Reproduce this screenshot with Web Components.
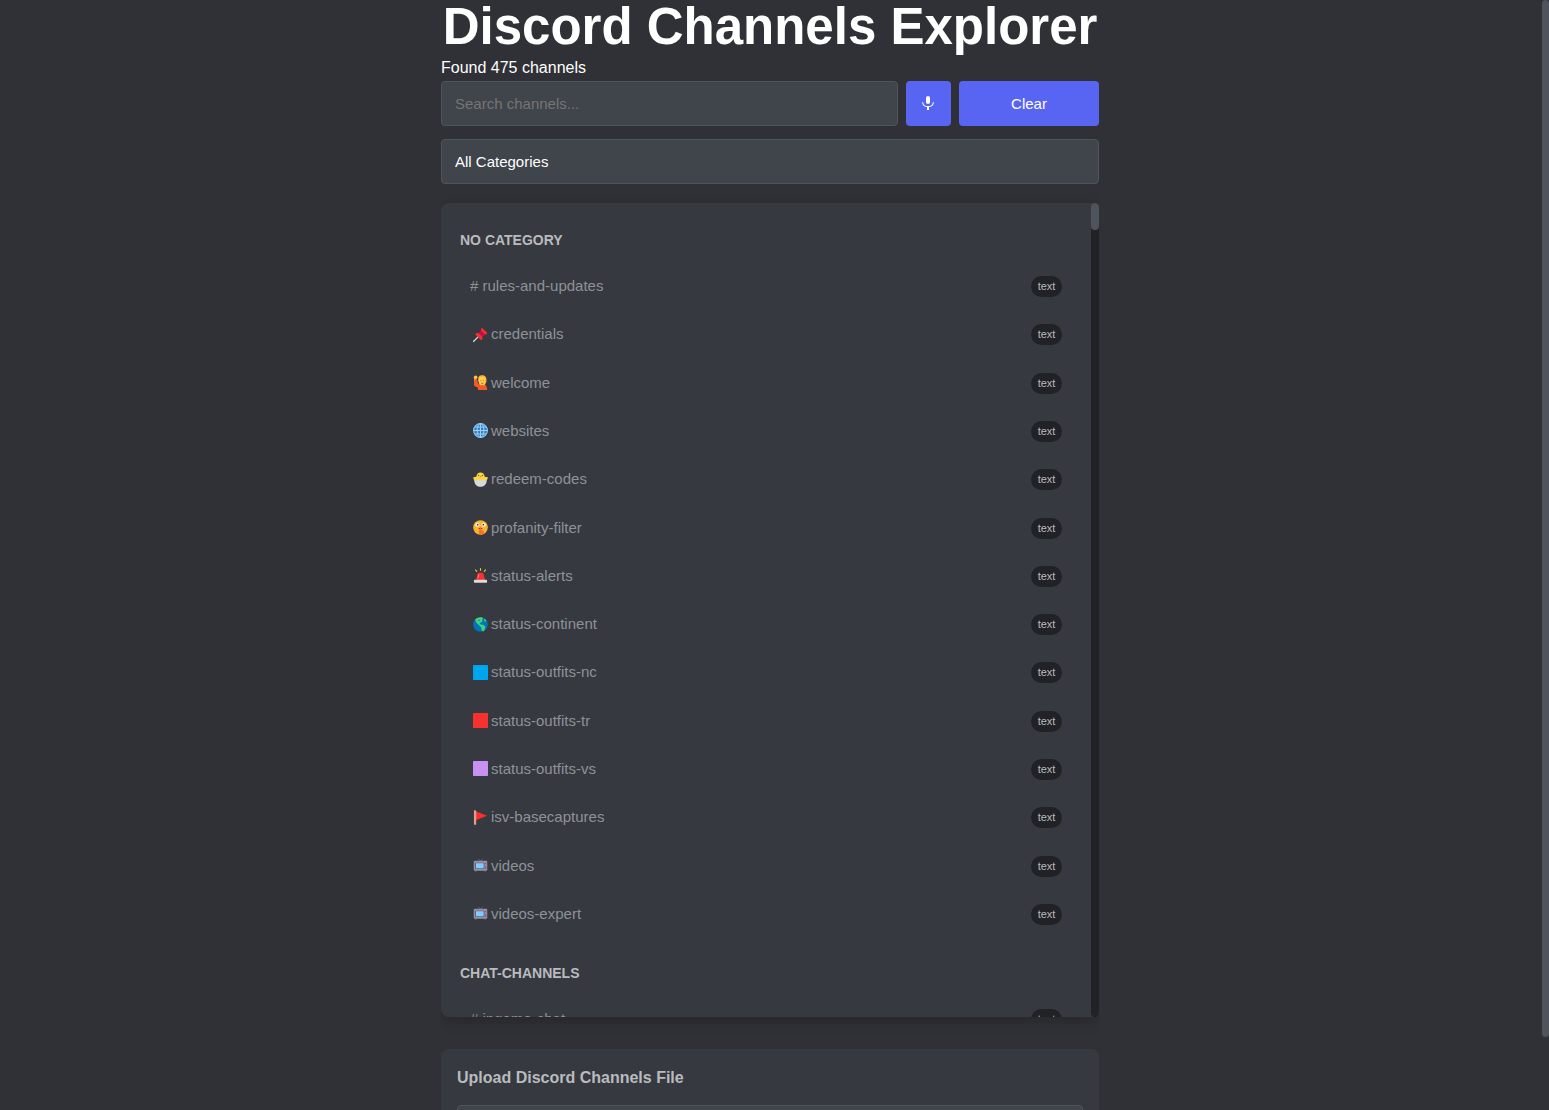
<!DOCTYPE html>
<html lang="en">
<head>
  <meta charset="UTF-8">
  <meta name="viewport" content="width=device-width, initial-scale=1.0">
  <title>Discord Channels Explorer</title>
  <style>
    :root {
      --bg: #2f3136;
      --card: #36393f;
      --field: #40444b;
      --line: #4f545c;
      --dark: #202225;
      --accent: #5865f2;
      --muted: #8e9297;
      --heading: #b9bbbe;
    }

    body {
      margin: 0;
      height: 100vh;
      overflow: hidden;
      background: var(--bg);
      color: #fff;
      font-family: "Liberation Sans", Arial, sans-serif;
      font-size: 15px;
    }
  </style>
</head>
<body>
  <channels-app>
    <page-title count="475">Discord Channels Explorer</page-title>
    <search-bar></search-bar>
    <category-filter></category-filter>
    <channel-list></channel-list>
    <upload-card>Upload Discord Channels File</upload-card>
  </channels-app>

  <script>
    // Channel icons, all on a 16x16 grid
    const ICONS = {
      pin: '<path d="M.5 15.5 6 10" stroke="#d5dbe0" stroke-width="1.4" stroke-linecap="round"/><path d="M9.5.8 15.3 6.4 14 8l-1.2-.3-3 3 .2 2.3-1.2 1.2L2.3 7.7l1.3-1.2 2.4.2 2.8-3-.4-1.4z" fill="#f8312f"/><path d="m8.8 3.7 4 4-3 3L6 6.7z" fill="#ca0b4a"/>',
      wave: '<path d="M1 3.5 3.6 3l.7 4.5L6 9.5l-1 2.3C2.4 10.8 1.3 8.8 1 7z" fill="#ff822d"/><path d="M1 10.5 1.5 5h3l.8 4.500 7 .3c2 1 2.700 3.200 2.900 6.200H5.300L5 13C2.600 13 1.300 12 1 10.500z" fill="#f3582c"/><circle cx="2.8" cy="2.3" r="1.9" fill="#ffc83d"/><path d="M5.5 6C5 1.500 7 .3 9.800.3 13.500.3 15 3 14.200 7.500L12.500 11h-5z" fill="#ffb02e"/><ellipse cx="9.7" cy="6.3" rx="3.5" ry="4.4" fill="#ffd04b"/><path d="M8 6h.8M11 6h.8M8.600 8.500q1.300 1 2.500 0" stroke="#7d4533" stroke-width=".8" fill="none"/>',
      globe: '<circle cx="8" cy="8" r="7.400" fill="#3c7fb8" stroke="#83cbff" stroke-width="1.1"/><ellipse cx="8" cy="8" rx="3.6" ry="7.4" fill="none" stroke="#9bd5ff"/><path d="M8 .6v14.800M.6 8h14.800M1.700 4.300h12.600M1.700 11.700h12.600" stroke="#9bd5ff"/>',
      chick: '<path d="M.2 5.500 3.500 5C3.900 2 5.500.4 8 .4S12.100 2 12.500 5l3.300.5c0 2-1 3.500-3 4H3.200c-2-.5-3-2-3-4z" fill="#fcd53f"/><path d="M1.300 8 3.200 9l2-1.500L8 9.300l2.800-1.800 2 1.500 1.900-1c.2 4.800-2.500 7.800-6.700 7.800S1.100 12.800 1.300 8z" fill="#d9d9d9"/><path d="M7 4.300h2L8 5.500z" fill="#f8642f"/><circle cx="6" cy="3.6" r=".6" fill="#5b4330"/><circle cx="10" cy="3.6" r=".6" fill="#5b4330"/>',
      hush: '<circle cx="8" cy="8" r="7.8" fill="#ffb02e"/><circle cx="4.7" cy="5" r="2.2" fill="#fff"/><circle cx="11.3" cy="5" r="2.2" fill="#fff"/><circle cx="5" cy="5" r=".9" fill="#402a32"/><circle cx="11" cy="5" r=".9" fill="#402a32"/><path d="M6 9.300q2-1 4 0" stroke="#5b3528" fill="none"/><path d="M7.300 8.500c1-.8 1.700 0 1.700 1v1.700c2.200-.3 3 .7 2.700 2.300L10 15.800H8c-1.500-.8-2-2-1.700-3.800z" fill="#f3722a"/>',
      siren: '<path d="m8 .3v2.600M2.500 1.700 4.300 4M13.500 1.700 11.700 4" stroke="#fcc53f" stroke-width="1.2"/><path d="M3 13 4.800 6.500Q5.100 5 6.500 5h3q1.400 0 1.700 1.500L13 13z" fill="#f8312f"/><path d="M6.200 6.800 5.200 11" stroke="#ff8a80"/><rect x="1" y="12.6" width="14" height="3" rx=".7" fill="#dcdcdc"/>',
      earth: '<circle cx="8" cy="8" r="7.8" fill="#0074ba"/><path d="M2.300 2.700C4.200.8 7.200 0 9.700.4l1.300 1.700-1.500.8.8 1.600-2.400 1.700-1 .6 1.600 1.300 3 .4 1.700 2.200-1.500 4.500-2.200-.6L8.500 11 6.200 8.600 3.700 6.500z" fill="#44d17a"/><path d="m11.800 1.300 2.600 2.500-.9 1.400-1.800-.7z" fill="#35bd68"/><path d="m5 3.800 1.800-1.200L7.400 4z" fill="#0074ba"/>',
      blue: '<rect width="16" height="16" rx=".8" fill="#00a6ed"/>',
      red: '<rect width="16" height="16" rx=".8" fill="#f8312f"/>',
      purple: '<rect width="16" height="16" rx=".8" fill="#c790f1"/>',
      flag: '<path d="M3 1.300 15 6.200 3 10.900z" fill="#f8312f"/><rect x="1" y=".3" width="2.4" height="15.5" rx=".7" fill="#e39d89"/>',
      tv: '<path d="M8 3.500 5.700.8M8 3.500 10.300.8M3.800 13 2.800 15M12.200 13l1 2" stroke="#69666f"/><rect x=".8" y="3" width="14.4" height="10.5" rx="1" fill="#998ea4"/><rect x="2.6" y="5" width="9.4" height="6.7" rx=".6" fill="#30475e"/><rect x="3.2" y="5.5" width="8.2" height="5.7" fill="#83cbff"/><path d="M13.600 5v1.700" stroke="#e0344d" stroke-width="1.3"/><path d="M13.600 8.500v3" stroke="#6c6375"/>'
    };

    const CATEGORIES = [
      {
        name: 'NO CATEGORY',
        channels: [
          ['', '# rules-and-updates'],
          ['pin', 'credentials'],
          ['wave', 'welcome'],
          ['globe', 'websites'],
          ['chick', 'redeem-codes'],
          ['hush', 'profanity-filter'],
          ['siren', 'status-alerts'],
          ['earth', 'status-continent'],
          ['blue', 'status-outfits-nc'],
          ['red', 'status-outfits-tr'],
          ['purple', 'status-outfits-vs'],
          ['flag', 'isv-basecaptures'],
          ['tv', 'videos'],
          ['tv', 'videos-expert']
        ]
      },
      {
        name: 'CHAT-CHANNELS',
        channels: [['', '# ingame-chat']]
      }
    ];

    /**
     * Base class: opens a shadow root and fills it from template()
     */
    class BaseElement extends HTMLElement {
      connectedCallback() {
        if (this.shadowRoot) return;
        this.attachShadow({ mode: 'open' });
        this.shadowRoot.innerHTML = this.template();
      }
    }

    // Slim rounded scroll bar, thumb at the top
    class ScrollRail extends BaseElement {
      template() {
        return `
          <style>
            :host {
              display: block;
              flex: none;
              width: 8px;
              box-sizing: border-box;
              border-radius: 4px;
              background: var(--track, var(--dark));
            }
            .thumb {
              height: var(--thumb, 27px);
              border-radius: 4px;
              background: var(--line);
            }
          </style>
          <div class="thumb"></div>
        `;
      }
    }

    class ChannelsApp extends BaseElement {
      template() {
        return `
          <style>
            :host {
              display: flex;
              height: 100vh;
            }
            .page {
              flex: 1;
              min-width: 0;
              padding-right: 1px;
              overflow: hidden;
            }
            main {
              max-width: 658px;
              margin: 0 auto;
              overflow-x: clip;
            }
            scroll-rail {
              --track: transparent;
              --thumb: calc(100vh - 73px);
              padding-left: 1px;
            }
          </style>
          <div class="page"><main><slot></slot></main></div>
          <scroll-rail></scroll-rail>
        `;
      }
    }

    class PageTitle extends BaseElement {
      template() {
        return `
          <style>
            :host { display: block; }
            h1 {
              margin: 0;
              font-size: 51px;
              line-height: 54px;
              text-align: center;
              white-space: nowrap;
            }
            p {
              margin: 0;
              font-size: 16px;
              line-height: 27px;
            }
          </style>
          <h1><slot></slot></h1>
          <p>Found ${this.getAttribute('count')} channels</p>
        `;
      }
    }

    class SearchBar extends BaseElement {
      template() {
        return `
          <style>
            :host {
              display: flex;
              gap: 8px;
            }
            input, button {
              box-sizing: border-box;
              height: 45px;
              margin: 0;
              border-radius: 4px;
              font: inherit;
              color: #fff;
            }
            input {
              flex: 1;
              min-width: 0;
              padding: 0 13px;
              border: 1px solid var(--line);
              background: var(--field);
            }
            input::placeholder { color: #757575; }
            button {
              display: flex;
              align-items: center;
              justify-content: center;
              padding: 0;
              border: 0;
              background: var(--accent);
              cursor: pointer;
            }
            .mic { width: 45px; }
            .clear { width: 140px; }
          </style>
          <input type="text" placeholder="Search channels..." aria-label="Search channels">
          <button class="mic" type="button" aria-label="Voice search">
            <svg width="15" height="15" viewBox="0 0 15 15" fill="none">
              <rect x="5" y="0" width="4" height="8" rx="2" fill="#fff"/>
              <path d="M1.600 6.300c.2 3 2.400 4.400 5.400 4.400s5.200-1.400 5.400-4.400" stroke="#fff" stroke-width="1.1"/>
              <path d="M7 10.500V14" stroke="#fff" stroke-width="2"/>
            </svg>
          </button>
          <button class="clear" type="button">Clear</button>
        `;
      }
    }

    class CategoryFilter extends BaseElement {
      template() {
        return `
          <style>
            :host {
              display: block;
              margin-top: 13px;
            }
            select {
              display: block;
              appearance: none;
              box-sizing: border-box;
              width: 100%;
              height: 45px;
              margin: 0;
              padding: 0 13px;
              border: 1px solid var(--line);
              border-radius: 4px;
              background: var(--field);
              color: #fff;
              font: inherit;
            }
          </style>
          <select aria-label="Category">
            <option>All Categories</option>
          </select>
        `;
      }
    }

    class ChannelItem extends BaseElement {
      template() {
        const icon = ICONS[this.getAttribute('icon')];
        return `
          <style>
            :host {
              display: flex;
              align-items: center;
              padding: 0 10px;
              color: var(--muted);
            }
            svg {
              flex: none;
              margin: 0 3px;
            }
            .name {
              flex: 1;
              padding-bottom: 1px;
            }
            .type {
              box-sizing: border-box;
              min-width: 31px;
              margin-top: 1px;
              padding: 0 6px;
              border-radius: 12px;
              background: var(--dark);
              color: var(--heading);
              font-size: 11px;
              line-height: 21px;
              text-align: center;
            }
          </style>
          ${icon ? `<svg width="15" height="15" viewBox="0 0 16 16" fill="none" aria-hidden="true">${icon}</svg>` : ''}
          <span class="name"><slot></slot></span>
          <span class="type">text</span>
        `;
      }
    }

    class ChannelCategory extends BaseElement {
      template() {
        return `
          <style>
            :host {
              display: block;
              margin-bottom: 26px;
            }
            h3 {
              margin: 0 0 13px;
              color: var(--heading);
              font-size: 14px;
              line-height: 18px;
            }
            .items {
              display: grid;
              grid-auto-rows: minmax(48px, 1fr);
            }
            :host([full]) .items { min-height: 676px; }
          </style>
          <h3>${this.getAttribute('name')}</h3>
          <div class="items"><slot></slot></div>
        `;
      }
    }

    class ChannelList extends BaseElement {
      template() {
        const sections = CATEGORIES.map(cat => `
          <channel-category name="${cat.name}" ${cat.channels.length > 1 ? 'full' : ''}>
            ${cat.channels.map(([icon, name]) => `<channel-item icon="${icon}">${name}</channel-item>`).join('')}
          </channel-category>
        `).join('');

        return `
          <style>
            :host {
              display: flex;
              height: calc(100vh - 296px);
              margin-top: 19px;
              overflow: hidden;
              border-radius: 8px 4px 4px 8px;
              background: var(--card);
              box-shadow: 0 4px 15px rgba(0, 0, 0, 0.2);
            }
            .scroll {
              flex: 1;
              padding: 28px 19px 0;
              overflow: hidden;
            }
          </style>
          <div class="scroll">${sections}</div>
          <scroll-rail></scroll-rail>
        `;
      }
    }

    class UploadCard extends BaseElement {
      template() {
        return `
          <style>
            :host {
              display: block;
              margin-top: 32px;
              padding: 16px;
              border-radius: 8px;
              background: var(--card);
            }
            label {
              display: block;
              margin-bottom: 14px;
              color: var(--heading);
              font-size: 16px;
              font-weight: bold;
              line-height: 26px;
            }
            input {
              display: block;
              box-sizing: border-box;
              width: 100%;
              padding: 12px;
              border: 1px solid var(--line);
              border-radius: 4px;
              background: var(--field);
              color: #fff;
              font: inherit;
            }
          </style>
          <label for="file"><slot></slot></label>
          <input id="file" type="file">
        `;
      }
    }

    // Define the custom elements
    customElements.define('scroll-rail', ScrollRail);
    customElements.define('channel-item', ChannelItem);
    customElements.define('channel-category', ChannelCategory);
    customElements.define('channels-app', ChannelsApp);
    customElements.define('page-title', PageTitle);
    customElements.define('search-bar', SearchBar);
    customElements.define('category-filter', CategoryFilter);
    customElements.define('channel-list', ChannelList);
    customElements.define('upload-card', UploadCard);
  </script>
</body>
</html>
